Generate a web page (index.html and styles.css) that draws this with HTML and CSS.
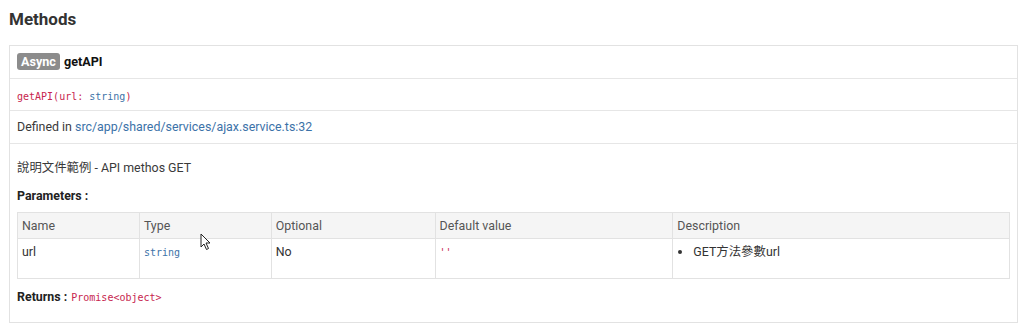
FILE: index.html
```html
<!DOCTYPE html>
<html lang="en">
<head>
    <meta charset="UTF-8">
    <meta name="viewport" content="width=device-width, initial-scale=1.0">
    <title>AjaxService - Methods</title>
    <link rel="stylesheet" href="styles.css">
</head>
<body>
    <h3 class="section-title">Methods</h3>

    <!-- Method: getAPI -->
    <div class="method">
        <div class="method-row method-name">
            <span class="modifier">Async</span>
            <b>getAPI</b>
        </div>
        <div class="method-row method-sig">
            <code>getAPI(url: <span class="type-link">string</span>)</code>
        </div>
        <div class="method-row">
            Defined in <a href="#" class="link">src/app/shared/services/ajax.service.ts:32</a>
        </div>
        <div class="method-row method-body">
            <p class="desc">說明文件範例 - API methos GET</p>
            <p class="label">Parameters :</p>
            <table class="params">
                <thead>
                    <tr>
                        <td class="col-name">Name</td>
                        <td class="col-type">Type</td>
                        <td class="col-opt">Optional</td>
                        <td class="col-default">Default value</td>
                        <td class="col-desc">Description</td>
                    </tr>
                </thead>
                <tbody>
                    <tr>
                        <td>url</td>
                        <td><code class="type-link">string</code></td>
                        <td>No</td>
                        <td><code>''</code></td>
                        <td>
                            <ul class="desc-list">
                                <li>GET方法參數url</li>
                            </ul>
                        </td>
                    </tr>
                </tbody>
            </table>
            <p class="returns"><b>Returns : </b><code>Promise&lt;object&gt;</code></p>
        </div>
    </div>

    <svg class="cursor" width="12" height="18" viewBox="0 0 12 18">
        <path d="M1 1 L1 14 L4 11 L6.5 16.5 L8.5 15.5 L6 10 L10 10 Z" fill="#fff" stroke="#222" stroke-width="1"/>
    </svg>
</body>
</html>
```

FILE: styles.css
```css
* {
    margin: 0;
    padding: 0;
    box-sizing: border-box;
}

body {
    background: #fff;
    color: #3a3a3a;
    font-family: Roboto, "Noto Sans CJK TC", sans-serif;
    font-size: 12.4px;
    line-height: 16px;
    padding: 9px 6px 0 9px;
    position: relative;
}

code {
    font-family: "DejaVu Sans Mono", monospace;
    font-size: 10px;
    color: #c7254e;
}

.section-title {
    font-size: 17px;
    font-weight: bold;
    line-height: 20px;
    color: #333;
    margin-bottom: 16px;
}

.method {
    border: 1px solid #e2e2e2;
    width: 1009px;
}

.method-row {
    padding: 8px 7px;
    line-height: 16px;
    border-bottom: 1px solid #e6e6e6;
}

.method-row:last-child {
    border-bottom: none;
}

.method-name {
    padding: 7px 7px 8px;
    height: 33px;
    font-size: 12.6px;
    color: #111;
}

.modifier {
    display: inline-block;
    background: #8c8c8c;
    color: #fff;
    font-weight: bold;
    font-size: 12.6px;
    line-height: 17px;
    padding: 0 4px;
    border-radius: 3px;
    margin-right: 1px;
}

.method-sig {
    height: 32px;
    padding-top: 9px;
}

.method-sig code {
    font-size: 10px;
}

.type-link {
    color: #3d73a8;
}

.link {
    color: #3c72a8;
    text-decoration: none;
}

.method-body {
    padding: 16px 7px 16px;
}

.desc {
    margin-bottom: 12px;
}

.label,
.returns b {
    font-weight: bold;
    color: #222;
}

.label {
    margin-bottom: 8px;
}

.params {
    width: 993px;
    border-collapse: collapse;
    margin-bottom: 10px;
}

.params td {
    border: 1px solid #e2e2e2;
    padding: 5px 4px 18px;
    line-height: 15px;
    vertical-align: top;
    color: #333;
}

.params thead td {
    background: #f5f5f5;
    color: #555;
    padding: 5px 4px;
}

.params code {
    font-size: 10px;
}

.col-name { width: 122px; }
.col-type { width: 132px; }
.col-opt { width: 164px; }
.col-default { width: 238px; }
.col-desc { width: 337px; }

.desc-list {
    padding-left: 16px;
}

.returns code {
    margin-left: 1px;
}

.cursor {
    position: absolute;
    left: 200px;
    top: 233px;
}
```
